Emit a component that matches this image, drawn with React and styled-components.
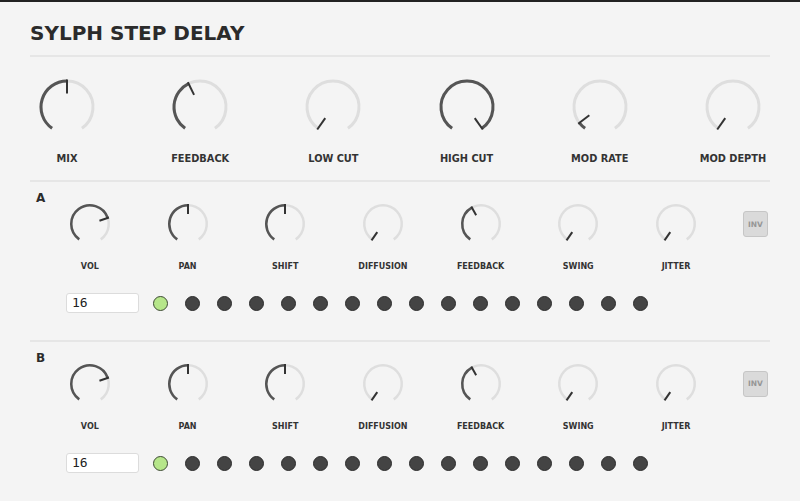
import React, { useState } from "react";
import styled, { createGlobalStyle } from "styled-components";

const MAIN_KNOBS = [
  { label: "MIX", value: 0.5 },
  { label: "FEEDBACK", value: 0.41 },
  { label: "LOW CUT", value: 0 },
  { label: "HIGH CUT", value: 1 },
  { label: "MOD RATE", value: 0.06 },
  { label: "MOD DEPTH", value: 0 },
];

const CHANNEL_KNOBS = [
  { label: "VOL", value: 0.745 },
  { label: "PAN", value: 0.5 },
  { label: "SHIFT", value: 0.5 },
  { label: "DIFFUSION", value: 0 },
  { label: "FEEDBACK", value: 0.4 },
  { label: "SWING", value: 0 },
  { label: "JITTER", value: 0 },
];

const SWEEP = 290;
const START = -145;

/* -------------------- STYLES -------------------- */

const GlobalStyle = createGlobalStyle`
  html, body {
    margin: 0;
    padding: 0;
    background: #f4f4f4;
  }
  * { box-sizing: border-box; }
`;

const Page = styled.div`
  font-family: "DejaVu Sans", Verdana, sans-serif;
  background: #f4f4f4;
  border-top: 2px solid #222;
  min-height: 501px;
  color: #333;
`;

const Header = styled.div`
  margin: 0 30px;
  padding-top: 19px;
  padding-bottom: 10px;
  border-bottom: 2px solid #e6e6e6;
`;

const Title = styled.h1`
  margin: 0;
  font-size: 20px;
  line-height: 24px;
  font-weight: 700;
  color: #2b2b2b;
`;

const MainRow = styled.div`
  display: flex;
  justify-content: space-between;
  margin: 0 30px;
  padding: 20px 0 15.5px;
`;

const KnobCol = styled.div`
  width: ${(p) => p.$width}px;
  display: flex;
  flex-direction: column;
  align-items: center;
  gap: ${(p) => p.$gap}px;
`;

const KnobLabel = styled.div`
  font-size: ${(p) => (p.$small ? 8 : 9.8)}px;
  line-height: ${(p) => (p.$small ? 10 : 12)}px;
  font-weight: 700;
  color: #333;
  white-space: nowrap;
`;

const Channel = styled.section`
  margin: 0 30px;
  border-top: 2px solid #e6e6e6;
  display: flex;
`;

const Letter = styled.div`
  flex: 0 0 5px;
  min-width: 0;
  margin-left: 6px;
  padding-top: 9px;
  font-size: 12px;
  line-height: 14px;
  font-weight: 700;
  color: #2b2b2b;
  white-space: nowrap;
`;

const ChannelBody = styled.div`
  flex: 1;
  padding-top: 20px;
  padding-bottom: 27px;
`;

const ChannelKnobs = styled.div`
  display: flex;
  align-items: flex-start;
`;

const InvButton = styled.button`
  width: 25px;
  height: 26px;
  margin: 9px 0 0 18px;
  padding: 0;
  background: #dadada;
  border: 1px solid #c6c6c6;
  border-radius: 3px;
  font-family: "DejaVu Sans", Verdana, sans-serif;
  font-size: 7.5px;
  font-weight: 700;
  color: #969696;
  cursor: pointer;
`;

const StepRow = styled.div`
  display: flex;
  align-items: center;
  gap: 17px;
  margin: 20.7px 0 0 25px;
`;

const StepsInput = styled.input`
  width: 73px;
  height: 20px;
  margin-right: -3.5px;
  padding: 0 5px;
  border: 1px solid #dcdcdc;
  border-radius: 3px;
  background: #fff;
  font-family: "DejaVu Sans Mono", monospace;
  font-size: 13px;
  color: #222;
  outline: none;
`;

const Step = styled.button`
  width: 15px;
  height: 15px;
  margin-top: 1px;
  padding: 0;
  border-radius: 50%;
  border: 1px solid ${(p) => (p.$on ? "#3d4a33" : "#2c2c2c")};
  background: ${(p) => (p.$on ? "#b6e68a" : "#444")};
  cursor: pointer;
  flex: none;
`;

/* -------------------- KNOB -------------------- */

function polar(c, r, deg) {
  const a = (deg * Math.PI) / 180;
  return [c + r * Math.sin(a), c - r * Math.cos(a)];
}

function arc(c, r, from, to) {
  const [x1, y1] = polar(c, r, from);
  const [x2, y2] = polar(c, r, to);
  const large = to - from > 180 ? 1 : 0;
  return `M ${x1} ${y1} A ${r} ${r} 0 ${large} 1 ${x2} ${y2}`;
}

function Knob({ size, r, stroke, inner, value }) {
  const c = size / 2;
  const angle = START + value * SWEEP;
  const [ix1, iy1] = polar(c, inner, angle);
  const [ix2, iy2] = polar(c, r + stroke / 2, angle);
  return (
    <svg width={size} height={size} viewBox={`0 0 ${size} ${size}`}>
      <path d={arc(c, r, START, START + SWEEP)} fill="none" stroke="#dedede" strokeWidth={stroke} />
      {value > 0 && (
        <path d={arc(c, r, START, angle)} fill="none" stroke="#555" strokeWidth={stroke} />
      )}
      <line x1={ix1} y1={iy1} x2={ix2} y2={iy2} stroke="#333" strokeWidth={2} />
    </svg>
  );
}

function ChannelStrip({ name }) {
  const [steps, setSteps] = useState(
    Array.from({ length: 16 }, (_, i) => i === 0)
  );
  const [count, setCount] = useState("16");

  const toggle = (i) =>
    setSteps((s) => s.map((on, j) => (j === i ? !on : on)));

  return (
    <Channel>
      <Letter>{name}</Letter>
      <ChannelBody>
        <ChannelKnobs>
          {CHANNEL_KNOBS.map((k) => (
            <KnobCol key={k.label} $width={97.7} $gap={16.3}>
              <Knob size={44} r={18.75} stroke={2.5} inner={10} value={k.value} />
              <KnobLabel $small>{k.label}</KnobLabel>
            </KnobCol>
          ))}
          <InvButton>INV</InvButton>
        </ChannelKnobs>
        <StepRow>
          <StepsInput value={count} onChange={(e) => setCount(e.target.value)} />
          {steps.map((on, i) => (
            <Step key={i} $on={on} onClick={() => toggle(i)} />
          ))}
        </StepRow>
      </ChannelBody>
    </Channel>
  );
}

/* -------------------- COMPONENT -------------------- */

export default function App() {
  return (
    <Page>
      <GlobalStyle />
      <Header>
        <Title>SYLPH STEP DELAY</Title>
      </Header>

      <MainRow>
        {MAIN_KNOBS.map((k) => (
          <KnobCol key={k.label} $width={74} $gap={15.5}>
            <Knob size={60} r={26} stroke={3} inner={13.5} value={k.value} />
            <KnobLabel>{k.label}</KnobLabel>
          </KnobCol>
        ))}
      </MainRow>

      <ChannelStrip name="A" />
      <ChannelStrip name="B" />
    </Page>
  );
}
